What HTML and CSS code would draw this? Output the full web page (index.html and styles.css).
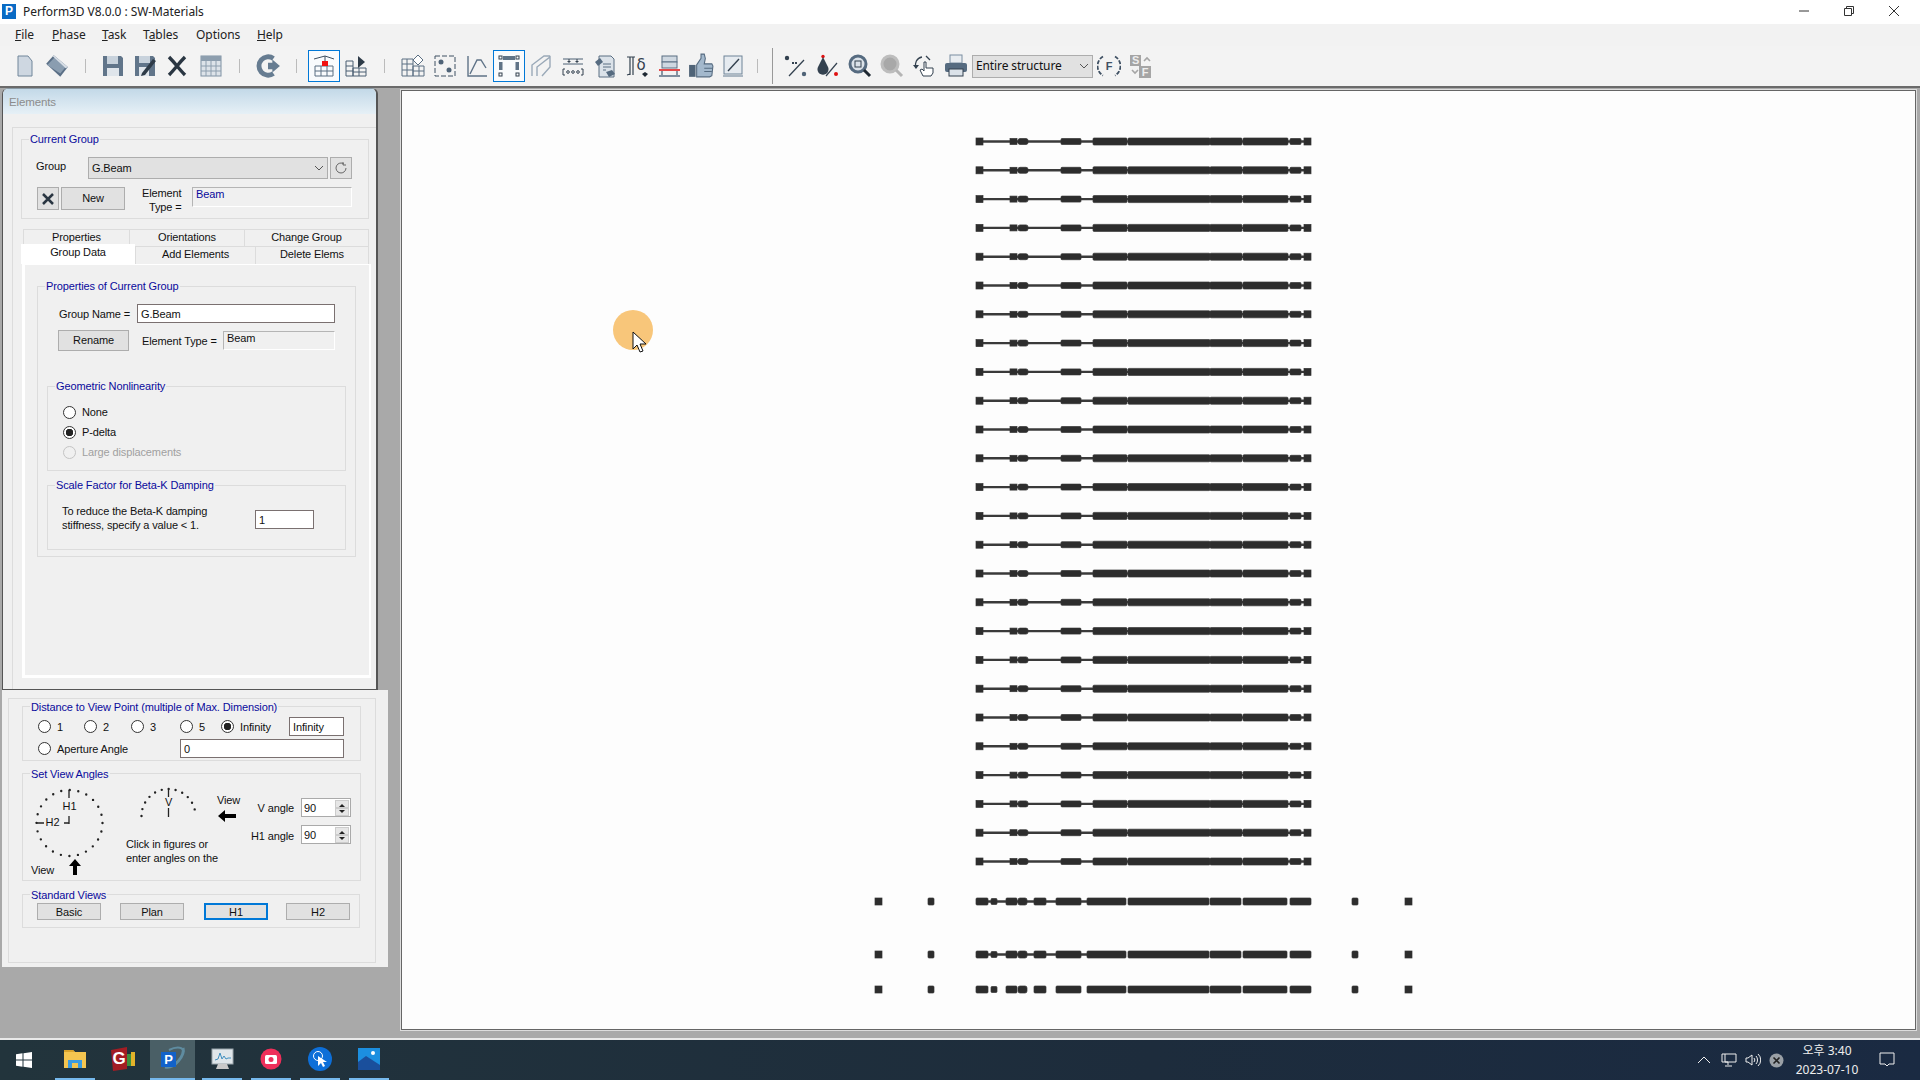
FILE: index.html
```html
<!DOCTYPE html>
<html lang="en">
<head>
    <meta charset="UTF-8">
    <title>Perform3D V8.0.0 : SW-Materials</title>
    <link rel="stylesheet" href="styles.css">
</head>
<body>

    <!-- Window title -->
    <div class="titlebar">
        <div class="app-logo">P</div>
        <div class="app-title">Perform3D V8.0.0 : SW-Materials</div>
        <div class="win-buttons">
            <svg width="12" height="12" viewBox="0 0 12 12"><path d="M1 6h10" stroke="#333" fill="none"/></svg>
            <svg width="12" height="12" viewBox="0 0 12 12"><path d="M1.5 3.5h7v7h-7zM3.5 3.5v-2h7v7h-2" stroke="#333" fill="none"/></svg>
            <svg width="12" height="12" viewBox="0 0 12 12"><path d="M1 1l10 10M11 1L1 11" stroke="#333" fill="none"/></svg>
        </div>
    </div>

    <div class="menubar">
        <span class="menu-item m-file"><u>F</u>ile</span>
        <span class="menu-item m-phase"><u>P</u>hase</span>
        <span class="menu-item m-task"><u>T</u>ask</span>
        <span class="menu-item m-tables">T<u>a</u>bles</span>
        <span class="menu-item m-options">Options</span>
        <span class="menu-item m-help"><u>H</u>elp</span>
    </div>

    <!-- Toolbar: one .tool per button, .sep for the gaps -->
    <div class="toolbar">
        <div class="tool"><svg width="24" height="24" viewBox="0 0 24 24"><path d="M5 2h10l4 5v15H5z" fill="#ced7e1" stroke="#71869a"/></svg></div>
        <div class="tool"><svg width="26" height="26" viewBox="0 0 24 24"><path d="M2 10l7-8 13 11-7 9z" fill="#5a6f86"/><path d="M3 11l7-7 10 9-5 6z" fill="#8a9db0"/><path d="M9 2l13 11-2 1L8 3z" fill="#d7dee6"/></svg></div>
        <div class="sep"><i></i></div>
        <div class="tool"><svg width="24" height="24" viewBox="0 0 24 24"><path d="M2 2h18l2 2v18H2z" fill="#61758a"/><rect x="6" y="2" width="11" height="8" fill="#c8d2dc"/><rect x="6" y="14" width="12" height="8" fill="#dfe5eb"/></svg></div>
        <div class="tool"><svg width="24" height="24" viewBox="0 0 24 24"><path d="M2 2h18l2 2v18H2z" fill="#61758a"/><rect x="6" y="2" width="11" height="7" fill="#c8d2dc"/><rect x="6" y="13" width="10" height="9" fill="#dfe5eb"/><path d="M9 19l11-14 3 2-11 14-4 1z" fill="#2e3b48"/></svg></div>
        <div class="tool"><svg width="24" height="24" viewBox="0 0 24 24"><path d="M4 3c6 6 10 12 16 18M20 3C14 9 10 15 4 21" stroke="#2a3642" stroke-width="3.4" fill="none"/></svg></div>
        <div class="tool grid-tool"><svg width="24" height="24" viewBox="0 0 24 24"><rect x="2" y="2" width="20" height="20" fill="#dde3e9" stroke="#7f91a3"/><rect x="2" y="2" width="20" height="5" fill="#8d9eae"/><path d="M2 12h20M2 17h20M7 7v15M12 7v15M17 7v15" stroke="#8d9eae" fill="none"/></svg></div>
        <div class="sep s25"><i></i></div>
        <div class="tool"><svg width="26" height="26" viewBox="0 0 24 24"><path d="M17 5a8.500 8.500 0 1 0 0 14" stroke="#667c91" stroke-width="4.500" fill="none"/><path d="M12 9h4V6l7 6-7 6v-3h-4z" fill="#667c91"/></svg></div>
        <div class="sep"><i></i></div>
        <div class="tool active"><svg width="24" height="24" viewBox="0 0 24 24"><path d="M2 5l11-3 9 3M13 2v9" stroke="#3d4f60" fill="none"/><path d="M3 12h18v10H3zM3 17h18M9 12v10M15 12v10" fill="none" stroke="#5a6e82"/><rect x="10" y="7" width="6" height="5" fill="#f01010"/></svg></div>
        <div class="tool"><svg width="24" height="24" viewBox="0 0 24 24"><path d="M2 7h7v15H2zM2 12h7M2 17h7M9 14h13v8H9zM15 14v8M9 18h13" fill="none" stroke="#4b5f73"/><path d="M14 2l7 6-7 6z" fill="#2e3b48"/></svg></div>
        <div class="sep s25"><i></i></div>
        <div class="tool"><svg width="24" height="24" viewBox="0 0 24 24"><path d="M1 5h11v17H1zM1 10h11M1 16h11M6 5v17M12 12h11v10H12zM12 17h11M18 12v10" fill="none" stroke="#5a6e82"/><path d="M17 1l5 5-5 5-5-5z" fill="#fff" stroke="#5a6e82"/></svg></div>
        <div class="tool"><svg width="24" height="24" viewBox="0 0 24 24"><rect x="2" y="2" width="20" height="20" fill="none" stroke="#3f5063" stroke-dasharray="5 2"/><circle cx="8" cy="8" r="2.500" fill="#4f6377"/><circle cx="16" cy="16" r="2.500" fill="#4f6377"/></svg></div>
        <div class="tool"><svg width="24" height="24" viewBox="0 0 24 24"><path d="M3 2v20h19" fill="none" stroke="#5f7387" stroke-width="1.400"/><path d="M5 20L12 6l4 0 5 8" fill="none" stroke="#5f7387" stroke-width="1.400"/></svg></div>
        <div class="tool active"><svg width="24" height="24" viewBox="0 0 24 24"><rect x="6" y="2" width="12" height="4" fill="#5f7387"/><rect x="2" y="2" width="3" height="3" fill="none" stroke="#33414f"/><rect x="19" y="2" width="3" height="3" fill="none" stroke="#33414f"/><rect x="2" y="8" width="3.500" height="8" fill="#5f7387"/><rect x="18.500" y="8" width="3.500" height="8" fill="#5f7387"/><rect x="2" y="19" width="3" height="3" fill="none" stroke="#33414f"/><rect x="19" y="19" width="3" height="3" fill="none" stroke="#33414f"/></svg></div>
        <div class="tool"><svg width="24" height="24" viewBox="0 0 24 24"><path d="M3 22V11l12-9h6M8 22V13l13-10v10L13 22" fill="none" stroke="#9aa9b8" stroke-width="1.400"/></svg></div>
        <div class="tool"><svg width="24" height="24" viewBox="0 0 24 24"><path d="M2 5h20M2 10h20" stroke="#4c6075"/><path d="M8 5v3M16 5v3" stroke="#33414f"/><path d="M6 7l2 2 2-2M14 7l2 2 2-2" fill="#33414f"/><path d="M4 15H2v6h2M20 15h2v6h-2" stroke="#33414f" fill="none"/><circle cx="7" cy="18" r="1.300" fill="none" stroke="#33414f"/><circle cx="12" cy="18" r="1.300" fill="none" stroke="#33414f"/><circle cx="17" cy="18" r="1.300" fill="none" stroke="#33414f"/></svg></div>
        <div class="tool"><svg width="24" height="24" viewBox="0 0 24 24"><path d="M6 2h12l3 3v18H6z" fill="#dbe2e9" stroke="#5a6e82"/><path d="M10 10h8M10 13h8M10 16h3" stroke="#5a6e82"/><path d="M2 8l5-4 3 4-5 4zM13 18l6-2 3 4-6 3z" fill="#566b80"/></svg></div>
        <div class="tool"><svg width="24" height="24" viewBox="0 0 24 24"><path d="M2 3h8M5 3v18M8 3v18M2 21l3-1" fill="none" stroke="#33414f" stroke-width="1.200"/><text x="16" y="16" class="tool-text delta">δ</text><path d="M17 20l3 3 3-3-3-2z" fill="#1e2832"/></svg></div>
        <div class="tool"><svg width="24" height="24" viewBox="0 0 24 24"><rect x="5" y="2" width="15" height="6" fill="#cfd8e1" stroke="#5a6e82"/><rect x="5" y="8" width="15" height="6" fill="#cfd8e1" stroke="#5a6e82"/><path d="M2 16h21" stroke="#e02020" stroke-width="1.600"/><path d="M5 17v4M20 17v4M2 22h21" stroke="#5a6e82" stroke-width="1.400"/></svg></div>
        <div class="tool"><svg width="26" height="26" viewBox="0 0 24 24"><path d="M1 11h6v11H1z" fill="#4f6377"/><path d="M8 11l4-6V1h3l1 4-1 5h7l1 2-1 9-2 1H8z" fill="#a3b8cc" stroke="#566b80"/><path d="M15 14h8M15 17h7" stroke="#566b80"/></svg></div>
        <div class="tool"><svg width="24" height="24" viewBox="0 0 24 24"><rect x="3" y="2" width="18" height="18" fill="#e6ebf0" stroke="#6f8498"/><path d="M7 17L18 5" stroke="#33414f" stroke-width="1.400"/><path d="M2 22h20" stroke="#8a9bab" stroke-width="1.400"/></svg></div>
        <div class="sep s31"><i></i><i class="tall"></i></div>
        <div class="tool"><svg width="24" height="24" viewBox="0 0 24 24"><circle cx="3" cy="4" r="2.200" fill="#33414f"/><circle cx="20" cy="20" r="2.200" fill="#4f6377"/><path d="M8 9h2M11 9h2" stroke="#33414f" stroke-width="2"/><path d="M5 22L20 6" stroke="#33414f" stroke-width="1.200"/></svg></div>
        <div class="tool"><svg width="24" height="24" viewBox="0 0 24 24"><circle cx="7" cy="2.500" r="1.700" fill="#e01010"/><path d="M7 3l5 10a5.500 5.500 0 1 1-10 0z" fill="#33414f"/><path d="M10 22l11-13" stroke="#33414f" stroke-width="1.200"/><circle cx="20" cy="20" r="2" fill="#e01010"/></svg></div>
        <div class="tool"><svg width="24" height="24" viewBox="0 0 24 24"><circle cx="10" cy="10" r="8" fill="#dbe2e9" stroke="#566b80" stroke-width="3"/><rect x="7" y="7" width="6" height="6" fill="none" stroke="#33414f"/><path d="M16 16l6 6" stroke="#1e2832" stroke-width="3"/></svg></div>
        <div class="tool"><svg width="24" height="24" viewBox="0 0 24 24"><circle cx="10" cy="10" r="8" fill="#a8a8a8" stroke="#bdbdbd" stroke-width="3"/><path d="M16 16l6 6" stroke="#b5b5b5" stroke-width="3"/></svg></div>
        <div class="tool"><svg width="24" height="24" viewBox="0 0 24 24"><path d="M10 3a8 8 0 0 0-6 11M14 2l4 4" fill="none" stroke="#33414f" stroke-width="1.300"/><path d="M1 11l3 4 3-4z" fill="#33414f"/><path d="M11 22l-3-6 2-1 2 2V8h2v6h7v5l-2 3z" fill="#fff" stroke="#33414f"/></svg></div>
        <div class="tool"><svg width="24" height="24" viewBox="0 0 24 24"><rect x="6" y="1" width="12" height="8" fill="#e9edf1" stroke="#7b8ea1"/><rect x="1" y="9" width="22" height="9" rx="2" fill="#566b80"/><rect x="5" y="15" width="14" height="7" fill="#dbe2e9" stroke="#33414f"/></svg></div>
        <div class="combo view-combo">Entire structure<svg class="chev" width="10" height="6" viewBox="0 0 10 6"><path d="M1 1l4 4 4-4" fill="none" stroke="#555"/></svg></div>
        <div class="tool"><svg width="24" height="24" viewBox="0 0 24 24"><path d="M6 2.500a11 11 0 0 0 0 19M18 2.500a11 11 0 0 1 0 19" fill="none" stroke="#3f5063" stroke-width="1.800" stroke-dasharray="4 1.500"/><text x="12" y="16" class="tool-text">F</text></svg></div>
        <div class="tool"><svg width="24" height="24" viewBox="0 0 24 24"><rect x="1" y="1" width="11" height="11" fill="#a5a5a5"/><rect x="10" y="12" width="12" height="12" fill="#a5a5a5"/><text x="6.500" y="10" class="tool-text light">S</text><text x="16" y="22" class="tool-text light">F</text><path d="M15 7l3-3 3 3M3 16l3 3 3-3" fill="none" stroke="#a5a5a5" stroke-width="1.600"/></svg></div>
    </div>

    <div class="workspace">
        <div class="left-column">

            <!-- Elements phase panel -->
            <div class="elements-panel">
                <div class="panel-title">Elements</div>
                <div class="panel-frame">

                    <div class="group current-group">
                        <div class="legend">Current Group</div>
                        <div class="cg-row1">
                            <span class="cg-label">Group</span>
                            <div class="combo group-combo">G.Beam<svg class="chev" width="10" height="6" viewBox="0 0 10 6"><path d="M1 1l4 4 4-4" fill="none" stroke="#555"/></svg></div>
                            <button class="btn refresh-btn"><svg width="14" height="14" viewBox="0 0 14 14"><path d="M12 7a5 5 0 1 1-2-4" fill="none" stroke="#666"/><path d="M9 1v3h3" fill="none" stroke="#666"/></svg></button>
                        </div>
                        <div class="cg-row2">
                            <button class="btn x-btn"><svg width="14" height="14" viewBox="0 0 14 14"><path d="M2 2l10 10M12 2L2 12" stroke="#2a3642" stroke-width="2.500" fill="none"/></svg></button>
                            <button class="btn new-btn">New</button>
                            <div class="et-label">Element<br><span class="et-second">Type =</span></div>
                            <div class="readonly et-field blue-text">Beam</div>
                        </div>
                    </div>

                    <div class="tabs-top">
                        <div class="tab t-props">Properties</div>
                        <div class="tab t-orient">Orientations</div>
                        <div class="tab t-change">Change Group</div>
                    </div>
                    <div class="tabs-bottom">
                        <div class="tab-active">Group Data</div>
                        <div class="tab t-add">Add Elements</div>
                        <div class="tab t-delete">Delete Elems</div>
                    </div>

                    <div class="tab-page">
                        <div class="group props-group">
                            <div class="legend">Properties of Current Group</div>
                            <div class="gn-row">
                                <span class="gn-label">Group Name =</span>
                                <input class="text-input gn-input" type="text" value="G.Beam">
                            </div>
                            <div class="rename-row">
                                <button class="btn rename-btn">Rename</button>
                                <span class="rn-label">Element Type =</span>
                                <div class="readonly rn-field">Beam</div>
                            </div>

                            <div class="group geo-group">
                                <div class="legend">Geometric Nonlinearity</div>
                                <div class="radio-list">
                                    <label class="radio-row"><input type="radio" name="geo">None</label>
                                    <label class="radio-row"><input type="radio" name="geo" checked>P-delta</label>
                                    <label class="radio-row off"><input type="radio" name="geo" disabled>Large displacements</label>
                                </div>
                            </div>

                            <div class="group scale-group">
                                <div class="legend">Scale Factor for Beta-K Damping</div>
                                <div class="scale-row">
                                    <div class="scale-text">To reduce the Beta-K damping<br>stiffness, specify a value &lt; 1.</div>
                                    <input class="text-input scale-input" type="text" value="1">
                                </div>
                            </div>
                        </div>
                    </div>
                </div>
            </div>

            <!-- View settings panel -->
            <div class="view-panel">
                <div class="view-frame">
                    <div class="group dist-group">
                        <div class="legend">Distance to View Point (multiple of Max. Dimension)</div>
                        <div class="dist-row first">
                            <label class="radio-row d-1"><input type="radio" name="dist">1</label>
                            <label class="radio-row d-2"><input type="radio" name="dist">2</label>
                            <label class="radio-row d-3"><input type="radio" name="dist">3</label>
                            <label class="radio-row d-5"><input type="radio" name="dist">5</label>
                            <label class="radio-row d-inf"><input type="radio" name="dist" checked>Infinity</label>
                            <input class="text-input inf-input" type="text" value="Infinity">
                        </div>
                        <div class="dist-row">
                            <label class="radio-row d-ap"><input type="radio" name="dist">Aperture Angle</label>
                            <input class="text-input ap-input" type="text" value="0">
                        </div>
                    </div>

                    <div class="group angle-group">
                        <div class="legend">Set View Angles</div>
                        <div class="angle-body">
                            <!-- viewBox is in page pixels so the dials can be read off the screenshot -->
                            <svg class="dials" width="228" height="100" viewBox="23 781 228 100">
                                <circle cx="69.500" cy="823" r="33" fill="none" stroke="#222" stroke-width="2.400" stroke-linecap="round" stroke-dasharray="0 8.640"/>
                                <path d="M69 790v8M36 823h8M69 816v8M64 823h5" stroke="#222" stroke-width="1.300" fill="none"/>
                                <text x="69.500" y="810" text-anchor="middle" class="dial-text">H1</text>
                                <text x="52.500" y="826" text-anchor="middle" class="dial-text">H2</text>
                                <text x="31" y="874" class="dial-text">View</text>
                                <path d="M75 859l-6 7h4v9h4v-9h4z" fill="#000"/>
                                <path d="M141.500 816a27 27 0 0 1 54 0" fill="none" stroke="#222" stroke-width="2.400" stroke-linecap="round" stroke-dasharray="0 7.070"/>
                                <path d="M168.500 790v7M168.500 808v9" stroke="#222" stroke-width="1.300" fill="none"/>
                                <text x="168.500" y="806" text-anchor="middle" class="dial-text">V</text>
                                <text x="217" y="804" class="dial-text">View</text>
                                <path d="M218 816l7-6v4h11v4h-11v4z" fill="#000"/>
                                <text x="126" y="848" class="dial-text">Click in figures or</text>
                                <text x="126" y="862" class="dial-text">enter angles on the</text>
                            </svg>
                            <div class="angle-inputs">
                                <div class="angle-row">
                                    <span>V angle</span>
                                    <div class="spin-box">90
                                        <div class="spin-btns"><i class="up"></i><i class="down"></i></div>
                                    </div>
                                </div>
                                <div class="angle-row second">
                                    <span>H1 angle</span>
                                    <div class="spin-box">90
                                        <div class="spin-btns"><i class="up"></i><i class="down"></i></div>
                                    </div>
                                </div>
                            </div>
                        </div>
                    </div>

                    <div class="group std-group">
                        <div class="legend">Standard Views</div>
                        <div class="std-row">
                            <button class="btn std-btn">Basic</button>
                            <button class="btn std-btn plan">Plan</button>
                            <button class="btn std-btn h1 focused">H1</button>
                            <button class="btn std-btn h2">H2</button>
                        </div>
                    </div>
                </div>
            </div>
        </div>

        <!-- Structure view, viewBox in page pixels -->
        <div class="canvas">
            <svg class="structure" width="1513" height="938" viewBox="402 91 1513 938">
                <defs>
                    <g id="floor">
                        <path d="M983 0h321" stroke="#3a3a3a" stroke-width="2.400"/>
                        <rect x="976" y="-3.500" width="7" height="7"/>
                        <rect x="1010" y="-3" width="7" height="6"/>
                        <rect x="1018" y="-3" width="10" height="6" rx="2"/>
                        <rect x="1061" y="-3" width="20" height="6" rx="1"/>
                        <rect x="1093" y="-3.500" width="34" height="7" rx="1"/>
                        <rect x="1128" y="-3.500" width="82" height="7" rx="1"/>
                        <rect x="1210" y="-3.500" width="32" height="7" rx="1"/>
                        <rect x="1243" y="-3.500" width="45" height="7" rx="1"/>
                        <rect x="1290" y="-3" width="11" height="6" rx="1"/>
                        <rect x="1304" y="-3.500" width="7" height="7"/>
                    </g>
                    <g id="bay">
                        <rect x="875" y="-3.500" width="7" height="7"/>
                        <rect x="928" y="-3.500" width="6" height="7" rx="1"/>
                        <rect x="976" y="-3.500" width="12" height="7" rx="1"/>
                        <rect x="991" y="-3" width="6" height="6" rx="1"/>
                        <rect x="1006" y="-3.500" width="11" height="7" rx="1"/>
                        <rect x="1018" y="-3.500" width="9" height="7" rx="2"/>
                        <rect x="1034" y="-3.500" width="12" height="7" rx="1"/>
                        <rect x="1056" y="-3.500" width="25" height="7" rx="1"/>
                        <rect x="1087" y="-3.500" width="39" height="7" rx="1"/>
                        <rect x="1128" y="-3.500" width="81" height="7" rx="1"/>
                        <rect x="1210" y="-3.500" width="31" height="7" rx="1"/>
                        <rect x="1243" y="-3.500" width="44" height="7" rx="1"/>
                        <rect x="1290" y="-3.500" width="21" height="7" rx="1"/>
                        <rect x="1352" y="-3.500" width="6" height="7" rx="1"/>
                        <rect x="1405" y="-3.500" width="7" height="7"/>
                    </g>
                </defs>
                <g fill="#2d2d2d" stroke="#333" stroke-width="0.700">
                    <use href="#floor" y="141.500"/><use href="#floor" y="170.300"/><use href="#floor" y="199.100"/><use href="#floor" y="227.900"/>
                    <use href="#floor" y="256.700"/><use href="#floor" y="285.500"/><use href="#floor" y="314.300"/><use href="#floor" y="343.100"/>
                    <use href="#floor" y="371.900"/><use href="#floor" y="400.700"/><use href="#floor" y="429.500"/><use href="#floor" y="458.300"/>
                    <use href="#floor" y="487.100"/><use href="#floor" y="515.900"/><use href="#floor" y="544.700"/><use href="#floor" y="573.500"/>
                    <use href="#floor" y="602.300"/><use href="#floor" y="631.100"/><use href="#floor" y="659.900"/><use href="#floor" y="688.700"/>
                    <use href="#floor" y="717.500"/><use href="#floor" y="746.300"/><use href="#floor" y="775.100"/><use href="#floor" y="803.900"/>
                    <use href="#floor" y="832.700"/><use href="#floor" y="861.500"/>
                    <path d="M988 901.500h102M988 954.500h102" stroke="#3a3a3a" stroke-width="2.400"/>
                    <use href="#bay" y="901.500"/><use href="#bay" y="954.500"/><use href="#bay" y="989.500"/>
                </g>
                <!-- recorded mouse pointer -->
                <circle cx="633" cy="330" r="20" fill="#f8c67a"/>
                <path d="M633 332v17l4-4 3 7 3-1-3-7h6z" fill="#fff" stroke="#111"/>
            </svg>
        </div>
    </div>

    <!-- Windows taskbar -->
    <div class="taskbar">
        <div class="task-start"><svg width="16" height="16" viewBox="0 0 16 16"><path d="M0 2.300l6.500-1v6.300H0zM7.500 1.200L16 0v7.600H7.500zM0 8.500h6.500v6.300l-6.500-1zM7.500 8.500H16V16l-8.500-1.200z" fill="#fff"/></svg></div>
        <div class="task-app first-app open"><svg width="22" height="20" viewBox="0 0 22 20"><path d="M0 1h9l2 2h11v16H0z" fill="#f4c550"/><path d="M0 1h9l2 2H0z" fill="#d9a32c"/><rect x="4" y="11" width="14" height="8" fill="#3c9be0"/><rect x="8" y="14" width="6" height="5" fill="#f4c550"/></svg></div>
        <div class="task-app"><svg width="26" height="24" viewBox="0 0 26 24"><path d="M0 3l16-3v22L2 24z" fill="#a31d24"/><text x="8" y="17" class="g-text">G</text><rect x="16" y="7" width="4" height="12" fill="#3b8f3e"/><rect x="20" y="5" width="4" height="14" fill="#e3b32a"/></svg></div>
        <div class="task-app current open"><svg width="28" height="28" viewBox="0 0 28 28"><path d="M6 22C16 24 26 10 24 3" fill="none" stroke="#5f8ca0" stroke-width="3"/><path d="M10 5c8-4 16-3 14 3" fill="none" stroke="#5f8ca0" stroke-width="2"/><rect x="2" y="7" width="15" height="15" fill="#1262c9"/><text x="9.500" y="19" class="p-text">P</text></svg></div>
        <div class="task-app open"><svg width="24" height="24" viewBox="0 0 24 24"><rect x="2" y="2" width="21" height="15" fill="#dfe6ea" stroke="#9aa5ab"/><path d="M5 13l3-1 2-6 2 6 2-3 2 3 2-1h3" fill="none" stroke="#3f8fc0"/><path d="M8 17h9l2 5H6z" fill="#c9c9c9"/></svg></div>
        <div class="task-app open"><svg width="22" height="22" viewBox="0 0 22 22"><circle cx="11" cy="11" r="10.500" fill="#ee2f5a"/><rect x="5" y="7" width="12" height="9" rx="1.500" fill="#fff"/><circle cx="11" cy="11.500" r="2.500" fill="#ee2f5a"/></svg></div>
        <div class="task-app open"><svg width="24" height="24" viewBox="0 0 24 24"><circle cx="12" cy="12" r="12" fill="#0d6fd8"/><circle cx="10" cy="9" r="4.500" fill="none" stroke="#fff"/><path d="M10 9v10l3-3 2 4 2-1-2-4h4z" fill="#fff"/></svg></div>
        <div class="task-app open"><svg width="22" height="22" viewBox="0 0 22 22"><rect width="22" height="22" fill="#1c8fe0"/><path d="M0 22V14l8-6 14 9v5z" fill="#1a4f9c"/><circle cx="15" cy="5" r="2" fill="#fff"/></svg></div>

        <div class="tray">
            <svg class="tray-chevron" width="14" height="8" viewBox="0 0 14 8"><path d="M1 7l6-6 6 6" fill="none" stroke="#eee"/></svg>
            <svg class="tray-net" width="16" height="14" viewBox="0 0 16 14"><path d="M4 1h11v8H4M1 1h3v8H1zM4 9l3 0v3M4 13h7" fill="none" stroke="#eee"/></svg>
            <svg class="tray-sound" width="16" height="14" viewBox="0 0 16 14"><path d="M1 5h2l4-3v10l-4-3H1zM9 5a3 3 0 0 1 0 4M11 3a6 6 0 0 1 0 8M13 1a8 8 0 0 1 0 12" fill="none" stroke="#eee"/></svg>
            <svg class="tray-x" width="15" height="15" viewBox="0 0 15 15"><circle cx="7.500" cy="7.500" r="7" fill="#9aa0a6"/><path d="M4.500 4.500l6 6M10.500 4.500l-6 6" stroke="#222" stroke-width="1.600"/></svg>
            <div class="clock">오후 3:40<br>2023-07-10</div>
            <svg class="tray-note" width="16" height="16" viewBox="0 0 16 16"><path d="M1 1h14v11h-5l-2 2-2-2H1z" fill="none" stroke="#eee"/></svg>
        </div>
    </div>

</body>
</html>
```

FILE: styles.css
```css
* { box-sizing: border-box; }

body {
    margin: 0;
    width: 1920px;
    height: 1080px;
    overflow: hidden;
    display: flex;
    flex-direction: column;
    background: #a9a9a9;
    font-family: "Liberation Sans", Arial, sans-serif;
    font-size: 11px;
    letter-spacing: -0.12px;
    color: #111;
}

svg { display: block; }

/* Title bar */
.titlebar {
    height: 24px;
    padding-bottom: 2px;
    display: flex;
    align-items: center;
    background: #fff;
    font-family: "Noto Sans", sans-serif;
    font-size: 12px;
    letter-spacing: -0.07px;
}
.app-logo {
    width: 14px;
    height: 15px;
    margin-left: 2px;
    background: #0a6bc4;
    color: #fff;
    font: bold 12px/15px "Liberation Sans", sans-serif;
    text-align: center;
}
.app-title { margin-left: 7px; color: #222; }
.win-buttons {
    margin-left: auto;
    margin-right: 20px;
    display: flex;
    gap: 33px;
}

/* Menu */
.menubar {
    height: 22px;
    padding-bottom: 2px;
    display: flex;
    align-items: center;
    background: #f2f2f2;
    font-family: "Noto Sans", sans-serif;
    font-size: 12px;
    letter-spacing: -0.05px;
    color: #222;
}
.menu-item { width: 50px; }
.m-file { margin-left: 15px; width: 37px; }
.m-phase { width: 50px; }
.m-task { width: 41px; }
.m-tables { width: 53px; }
.m-options { width: 61px; }

/* Toolbar */
.toolbar {
    height: 42px;
    padding-left: 9px;
    display: flex;
    align-items: center;
    background: #f3f3f3;
    border-bottom: 2px solid #6a6a6a;
}
.tool {
    width: 32px;
    height: 32px;
    flex: none;
    display: flex;
    align-items: center;
    justify-content: center;
}
.tool.active {
    border: 1px solid #0078d7;
    background: #f9fbfd;
}
.tool.grid-tool { margin-left: 2px; }
.tool-text { font: bold 11px "Liberation Sans", sans-serif; text-anchor: middle; fill: #3f5063; }
.tool-text.light { fill: #eee; }
.tool-text.delta { font: 15px "DejaVu Sans", sans-serif; fill: #33414f; }
.sep {
    width: 24px;
    height: 32px;
    flex: none;
    display: flex;
    align-items: center;
    justify-content: center;
    gap: 14px;
}
.sep i { width: 1px; height: 14px; background: #bbb; }
.sep i.tall { height: 36px; background: #999; }
.sep.s25 { width: 25px; }
.sep.s31 { width: 31px; }

/* Combos and buttons */
.combo {
    display: flex;
    align-items: center;
    background: #e1e1e1;
    border: 1px solid #adadad;
    padding: 0 0 1px 3px;
}
.chev { margin-left: auto; margin-right: 3px; }
.view-combo {
    width: 121px;
    height: 23px;
    flex: none;
    font-family: "Noto Sans", sans-serif;
    font-size: 12px;
    color: #111;
}
.btn {
    padding: 0 0 2px;
    background: #e1e1e1;
    border: 1px solid #adadad;
    font: 11px "Liberation Sans", sans-serif;
    letter-spacing: -0.12px;
    color: #111;
    display: flex;
    align-items: center;
    justify-content: center;
}

/* Workspace */
.workspace {
    flex: 1;
    display: flex;
    min-height: 0;
    background: #a9a9a9;
}
.left-column {
    width: 390px;
    padding-left: 2px;
    flex: none;
}

.elements-panel {
    width: 376px;
    height: 602px;
    background: #f0f0f0;
    border: 1px solid #555;
    border-right-width: 2px;
    border-top-color: #8a9aa5;
    border-top-left-radius: 6px;
    border-top-right-radius: 6px;
}
.panel-title {
    height: 25px;
    padding: 7px 0 0 6px;
    background: linear-gradient(#c3d9e8, #e6f0f6);
    color: #8c8c8c;
    font-size: 11.5px;
    border-top-left-radius: 5px;
    border-top-right-radius: 5px;
}
.panel-frame {
    margin: 13px 0 0 9px;
    height: 562px;
    border: 1px solid #dcdcdc;
    border-right: none;
    border-bottom: none;
}

/* Group box with the caption sitting on its top border */
.group { border: 1px solid #dcdcdc; }
.legend {
    width: fit-content;
    height: 13px;
    margin: -7px 0 0 7px;
    padding: 0 1px;
    line-height: 13px;
    background: #f0f0f0;
    color: #0a0a9c;
}
.view-frame .legend { margin-top: -6px; }

.current-group { width: 348px; height: 80px; margin: 11px 0 0 8px; }
.cg-row1 {
    display: flex;
    margin-top: 11px;
    padding-left: 14px;
}
.cg-label { width: 52px; margin-top: 3px; }
.group-combo { width: 240px; height: 22px; }
.refresh-btn { width: 22px; height: 22px; margin-left: 2px; padding: 0; }
.cg-row2 {
    display: flex;
    margin-top: 8px;
    padding-left: 15px;
}
.x-btn { width: 22px; height: 23px; padding: 0; }
.new-btn { width: 64px; height: 23px; margin-left: 2px; }
.et-label { width: 50px; margin-left: 17px; margin-top: -1px; line-height: 14px; }
.et-second { margin-left: 7px; }
.readonly {
    border-top: 1px solid #b5b5b5;
    border-left: 1px solid #b5b5b5;
    border-right: 1px solid #fff;
    border-bottom: 1px solid #fff;
    padding: 0 0 0 3px;
}
.et-field { width: 160px; height: 20px; }
.blue-text { color: #0a0a9c; }

/* Tabs */
.tabs-top, .tabs-bottom {
    display: flex;
    align-items: flex-end;
}
.tabs-top { margin: 10px 0 0 10px; height: 17px; }
.tabs-bottom { margin-left: 8px; height: 18px; }
.tab {
    height: 17px;
    line-height: 15px;
    text-align: center;
    border-top: 1px solid #dcdcdc;
    border-left: 1px solid #dcdcdc;
}
.t-props { width: 106px; }
.t-orient { width: 115px; }
.t-change { width: 125px; border-right: 1px solid #dcdcdc; }
.t-add { width: 120px; height: 18px; }
.t-delete { width: 114px; height: 18px; border-right: 1px solid #dcdcdc; }
.tab-active {
    width: 114px;
    height: 20px;
    margin-top: -2px;
    line-height: 16px;
    text-align: center;
    background: #fff;
}

.tab-page {
    width: 349px;
    height: 414px;
    margin-left: 9px;
    background: #f0f0f0;
    border-style: solid;
    border-color: #fff;
    border-width: 1px 2px 3px 3px;
}
.props-group { width: 319px; height: 271px; margin: 21px 0 0 12px; }
.gn-row {
    display: flex;
    align-items: center;
    margin-top: 11px;
    padding-left: 21px;
}
.gn-label { width: 78px; }
.text-input {
    height: 19px;
    padding: 0 0 0 3px;
    border: 1px solid #7a7070;
    background: #fff;
    font: 11px "Liberation Sans", sans-serif;
    letter-spacing: -0.12px;
    color: #111;
    outline: none;
}
.gn-input { width: 198px; }
.rename-row {
    display: flex;
    align-items: center;
    margin-top: 7px;
    padding-left: 20px;
}
.rename-btn { width: 71px; height: 21px; }
.rn-label { width: 81px; margin-left: 13px; }
.rn-field { width: 112px; height: 19px; }

.geo-group { width: 299px; height: 85px; margin: 35px 0 0 9px; }
.radio-list { margin-top: 9px; padding-left: 15px; }
.radio-row {
    display: flex;
    align-items: center;
    height: 20px;
    gap: 6px;
}
.radio-row input {
    appearance: none;
    width: 13px;
    height: 13px;
    margin: 0;
    flex: none;
    border: 1px solid #333;
    border-radius: 50%;
    background: #fff;
}
.radio-row input:checked { background: radial-gradient(circle, #222 0 3.5px, #fff 4px); }
.radio-row.off { color: #a0a0a0; }
.radio-row.off input { border-color: #c4c4c4; background: #f0f0f0; }

.scale-group { width: 299px; height: 65px; margin: 14px 0 0 9px; }
.scale-row {
    display: flex;
    margin-top: 12px;
    padding-left: 14px;
}
.scale-text { width: 193px; line-height: 14px; }
.scale-input { width: 59px; margin-top: 6px; }

/* View panel */
.view-panel {
    width: 386px;
    height: 277px;
    background: #f0f0f0;
    overflow: hidden;
}
.view-frame {
    width: 368px;
    height: 265px;
    margin: 8px 0 0 6px;
    border: 1px solid #dcdcdc;
}
.dist-group { width: 339px; height: 55px; margin: 7px 0 0 13px; }
.dist-row {
    display: flex;
    align-items: center;
    height: 19px;
    padding-left: 15px;
    margin-top: 3px;
}
.dist-row.first { margin-top: 3px; }
.d-1 { width: 46px; }
.d-2 { width: 47px; }
.d-3 { width: 49px; }
.d-5 { width: 41px; }
.d-inf { width: 68px; }
.d-ap { width: 142px; }
.inf-input { width: 55px; }
.ap-input { width: 164px; }

.angle-group { width: 339px; height: 108px; margin: 12px 0 0 13px; }
.angle-body { display: flex; }
.dial-text { font: 11px "Liberation Sans", sans-serif; letter-spacing: -0.12px; fill: #111; }
.angle-inputs {
    width: 100px;
    margin-top: 17px;
    display: flex;
    flex-direction: column;
    gap: 8px;
}
.angle-row {
    display: flex;
    justify-content: flex-end;
    align-items: center;
    gap: 7px;
    white-space: nowrap;
}
.angle-row.second span { margin-top: 3px; }
.spin-box {
    width: 50px;
    height: 19px;
    flex: none;
    display: flex;
    align-items: center;
    padding-left: 2px;
    background: #fff;
    border: 1px solid #aaa;
}
.spin-btns {
    width: 14px;
    margin-left: auto;
    margin-right: 1px;
}
.spin-btns i {
    display: flex;
    justify-content: center;
    height: 8px;
    background: #e6e6e6;
    border: 1px solid #ccc;
}
.spin-btns i::after {
    content: "";
    margin-top: 1px;
    border-left: 3px solid transparent;
    border-right: 3px solid transparent;
}
.spin-btns .up::after { border-bottom: 3px solid #222; }
.spin-btns .down::after { border-top: 3px solid #222; }

.std-group { width: 338px; height: 34px; margin: 13px 0 0 13px; }
.std-row {
    display: flex;
    margin-top: 1px;
    padding-left: 14px;
}
.std-btn { width: 64px; height: 17px; padding: 0; }
.std-btn.plan { margin-left: 19px; }
.std-btn.h1 { margin-left: 20px; }
.std-btn.h2 { margin-left: 18px; }
.std-btn.focused { border: 2px solid #0078d7; }

/* Structure view */
.canvas {
    width: 1515px;
    height: 940px;
    margin: 2px 0 0 11px;
    flex: none;
    background: #fdfdfd;
    border: 1px solid #666;
    outline: 1px solid #ddd;
}

/* Taskbar */
.taskbar {
    height: 42px;
    flex: none;
    display: flex;
    align-items: flex-start;
    border-top: 2px solid #e9e9e9;
    background: linear-gradient(90deg, #22343c, #1d2c3c 60%, #1a2a42);
}
.task-start {
    width: 48px;
    height: 40px;
    display: flex;
    align-items: center;
    justify-content: center;
}
.task-app {
    width: 40px;
    height: 40px;
    margin-right: 9px;
    display: flex;
    align-items: center;
    justify-content: center;
    border-bottom: 2px solid transparent;
}
.task-app.open { border-bottom-color: #76b9ed; }
.task-app.first-app { margin-left: 7px; }
.task-app.current {
    width: 45px;
    margin-left: -3px;
    margin-right: 7px;
    background: #4a5f66;
}
.g-text { font: bold 17px "Liberation Sans", sans-serif; fill: #fff; text-anchor: middle; }
.p-text { font: bold 13px "Liberation Sans", sans-serif; fill: #fff; text-anchor: middle; }

.tray {
    margin-left: auto;
    height: 40px;
    display: flex;
    align-items: center;
    color: #eee;
}
.tray-net { margin-left: 10px; }
.tray-sound { margin-left: 8px; }
.tray-x { margin-left: 8px; }
.clock {
    width: 78px;
    margin-left: 4px;
    text-align: center;
    font-family: "Noto Sans", "Noto Sans CJK KR", sans-serif;
    font-size: 12px;
    letter-spacing: 0;
    line-height: 19px;
}
.tray-note { margin-left: 13px; margin-right: 25px; }
```
